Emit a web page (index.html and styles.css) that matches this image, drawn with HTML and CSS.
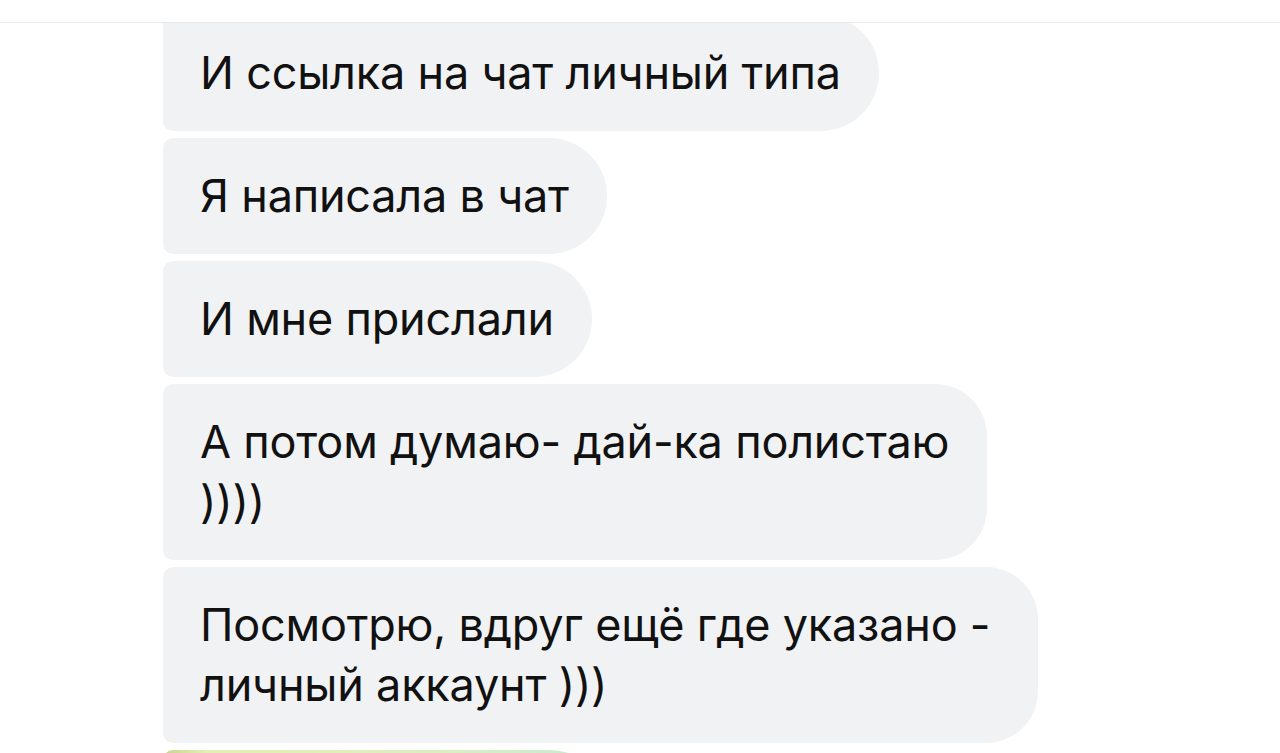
FILE: index.html
```html
<!DOCTYPE html>
<html lang="ru">
<head>
    <meta charset="UTF-8">
    <meta name="viewport" content="width=device-width, initial-scale=1.0">
    <title>Чат</title>
    <link rel="stylesheet" href="styles.css">
</head>
<body>
    <div class="topbar"></div>
    <div class="chat">
        <div class="messages">
            <div class="bubble">И ссылка на чат личный типа</div>
            <div class="bubble">Я написала в чат</div>
            <div class="bubble">И мне прислали</div>
            <div class="bubble bubble-tall">А потом думаю- дай-ка полистаю<br>))))</div>
            <div class="bubble bubble-tall bubble-wide">Посмотрю, вдруг ещё где указано -<br>личный аккаунт )))</div>
            <!-- next message (sticker / photo), cut by the screen edge -->
            <div class="bubble-media"></div>
        </div>
    </div>
</body>
</html>
```

FILE: styles.css
```css
body {
    margin: 0;
    background-color: #ffffff;
    font-family: Inter, "Liberation Sans", sans-serif;
    overflow: hidden;
}
.topbar {
    position: relative;
    z-index: 1;
    height: 22px;
    background-color: #ffffff;
    border-bottom: 1px solid #e9e9eb;
}
.chat {
    height: 730px;
    overflow: hidden;
}
.messages {
    display: flex;
    flex-direction: column;
    align-items: flex-start;
    gap: 7px;
    margin-top: -8px;
    padding-left: 163px;
}
.bubble {
    background-color: #f1f2f4;
    color: #111111;
    font-size: 45px;
    line-height: 60px;
    letter-spacing: -0.2px;
    padding: 28px 38px 28px 37px;
    border-radius: 10px 58px 58px 10px;
    white-space: nowrap;
}
.bubble-tall {
    border-radius: 10px 52px 52px 10px;
}
.bubble-wide {
    padding-right: 48px;
}
.bubble-media {
    width: 445px;
    height: 120px;
    border-radius: 10px 58px 58px 10px;
    background: linear-gradient(90deg, #c9d38c 0%, #e4efb6 10%, #dcefc0 60%, #c6ead3 100%);
}
```
